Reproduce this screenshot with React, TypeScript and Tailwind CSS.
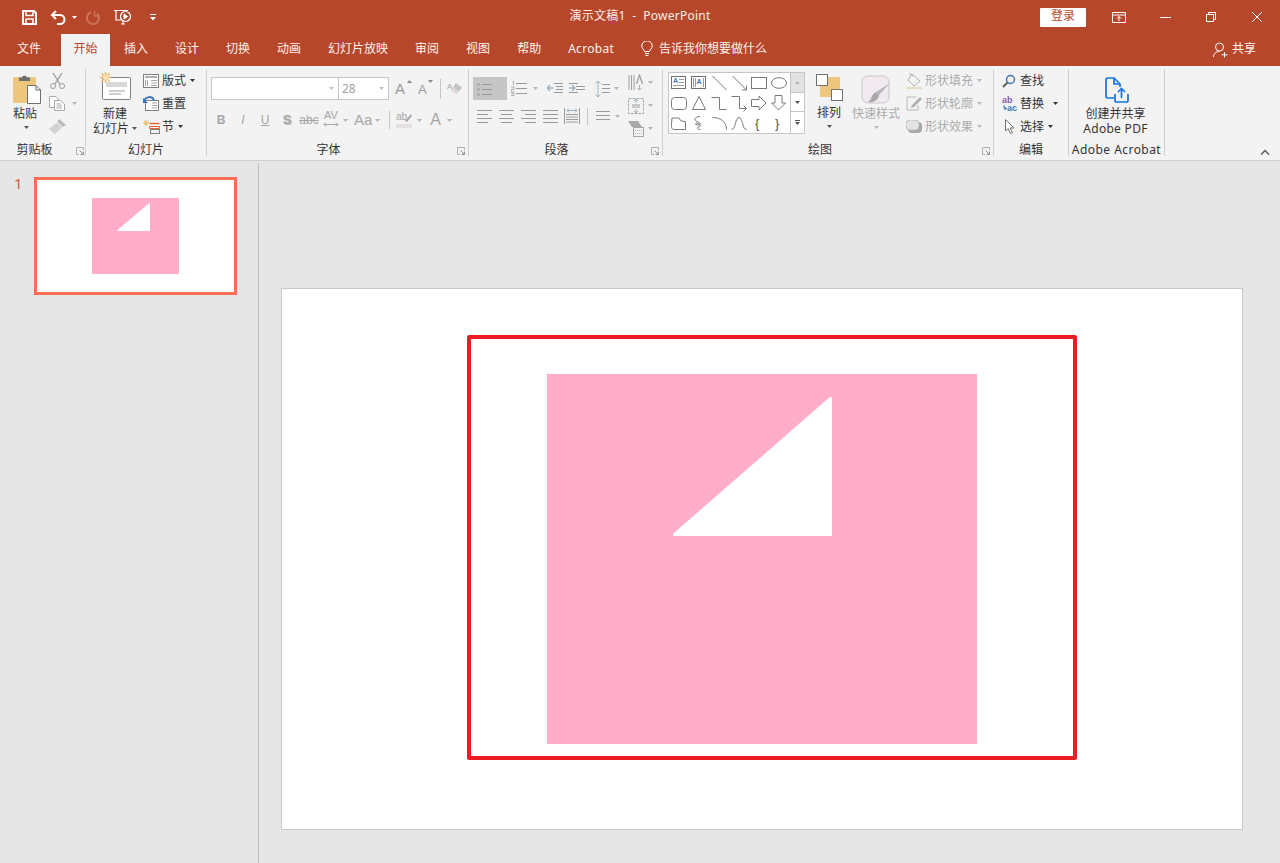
const S = "#7a7a7a";

function Caret({ className = "text-[#6a6a6a]" }: { className?: string }) {
  return (
    <svg width="5" height="3" viewBox="0 0 5 3" className={`shrink-0 ${className}`}>
      <path d="M0 0H5L2.5 3Z" fill="currentColor" />
    </svg>
  );
}

function Launcher({ className }: { className: string }) {
  return (
    <svg width="8" height="8" viewBox="0 0 8 8" className={`absolute bottom-[1px] ${className}`}>
      <path d="M7.5 3V.5H.5V7.5H3" fill="none" stroke="#b0b0b0" />
      <path d="M3.5 3.5L7 7M7.5 4.5V7.5H4.5" fill="none" stroke="#909090" />
    </svg>
  );
}

function Lines({ w = 14, rows = [2, 6, 10, 14], insets = [] as [number, number][], color = "#9a9a9a" }) {
  return (
    <svg width={w} height="16" viewBox={`0 0 ${w} 16`} className="shrink-0">
      {rows.map((y, i) => (
        <path key={y} d={`M${insets[i]?.[0] ?? 0} ${y + 0.5}H${w - (insets[i]?.[1] ?? 0)}`} stroke={color} />
      ))}
    </svg>
  );
}

function GroupLabel({ children, launcher }: { children: React.ReactNode; launcher?: string }) {
  return (
    <div className="relative h-[15px] text-center text-[12px] leading-[18px] text-[#333]">
      {children}
      {launcher && <Launcher className={launcher} />}
    </div>
  );
}

function Row({ children, className = "" }: { children: React.ReactNode; className?: string }) {
  return <div className={`flex h-[23px] items-center ${className}`}>{children}</div>;
}

function TitleBar() {
  return (
    <div className="grid h-[34px] grid-cols-[1fr_auto_1fr] items-center bg-[#b7472a] text-white">
      <div className="flex items-center pl-[22px]">
        <svg width="15" height="15" viewBox="0 0 15 15" fill="none" stroke="white" strokeWidth="2">
          <path d="M1 1H12L14 3V14H1Z" />
          <path d="M4 1V5.500H11V1" strokeWidth="1.500" />
          <path d="M4 14V9H11V14" strokeWidth="1.500" />
        </svg>
        <svg width="16" height="15" viewBox="0 0 16 15" fill="none" stroke="white" strokeWidth="2" className="ml-[13px]">
          <path d="M6 1L2 5L6 9" />
          <path d="M2 5H10A4.500 4.500 0 0 1 10 14H7" />
        </svg>
        <Caret className="ml-[6px] text-white" />
        <svg width="14" height="15" viewBox="0 0 14 15" fill="none" stroke="#cc7459" strokeWidth="2" className="ml-[9px]">
          <path d="M8.500 1V6H13.500" strokeWidth="1.500" />
          <path d="M11 3.500A6 6 0 1 1 5 2.300" />
        </svg>
        <svg width="18" height="16" viewBox="0 0 18 16" fill="none" stroke="white" className="ml-[14px]">
          <path d="M0 1.500H14M2 1.500V11H7" strokeWidth="1.200" />
          <circle cx="11.500" cy="7.500" r="5" strokeWidth="1.200" />
          <path d="M10 5V10L13.500 7.500Z" fill="white" />
          <path d="M7 15H11M9 11V15" strokeWidth="1.100" />
        </svg>
        <svg width="6" height="7" viewBox="0 0 6 7" className="ml-[18px]">
          <path d="M0 .5H6" stroke="white" />
          <path d="M0 3H6L3 6.500Z" fill="white" />
        </svg>
      </div>
      <div className="mb-[2px] text-[12px] tracking-[0.25px] whitespace-pre text-[#fbeee9]">演示文稿1  -  PowerPoint</div>
      <div className="flex items-center justify-end">
        <div className="flex h-[19px] w-[46px] items-center justify-center rounded-[1px] bg-white pb-[2px] text-[12px] text-[#b7472a]">
          登录
        </div>
        <svg width="14" height="11" viewBox="0 0 14 11" fill="none" stroke="white" className="ml-[26px]">
          <path d="M.5.5H13.500V10.500H.5ZM.5 3H13.500" />
          <path d="M7 9V4.500M5 6.500L7 4.500L9 6.500" />
        </svg>
        <svg width="11" height="1" viewBox="0 0 11 1" className="ml-[34px]">
          <path d="M0 .5H11" stroke="white" />
        </svg>
        <svg width="10" height="10" viewBox="0 0 10 10" fill="none" stroke="white" className="ml-[35px]">
          <path d="M.5 2.500H7.500V9.500H.5Z" />
          <path d="M2.500 2.500V.5H9.500V7.500H7.500" />
        </svg>
        <svg width="10" height="10" viewBox="0 0 10 10" fill="none" stroke="white" className="mr-[18px] ml-[36px]">
          <path d="M0 0L10 10M10 0L0 10" />
        </svg>
      </div>
    </div>
  );
}

function TabStrip() {
  const rest = ["设计", "切换", "动画", "幻灯片放映", "审阅", "视图", "帮助"];
  return (
    <div className="flex h-[32px] items-start bg-[#b7472a] pl-[17px] text-[12px] leading-[29px] text-[#fdf3ef]">
      <span>文件</span>
      <span className="ml-[20px] flex h-[32px] w-[49px] justify-center bg-[#f3f3f3] text-[#b7472a]">开始</span>
      <span className="ml-[14px]">插入</span>
      <div className="ml-[27px] flex items-center gap-[27px]">
        {rest.map((t) => (
          <span key={t}>{t}</span>
        ))}
        <span className="tracking-[0.3px]">Acrobat</span>
      </div>
      <svg width="12" height="16" viewBox="0 0 12 16" fill="none" stroke="white" className="mt-[7px] ml-[27px]">
        <path d="M3.500 10.500C3 8.500 .8 7.500 .8 5A5.200 5.200 0 0 1 11.200 5C11.200 7.500 9 8.500 8.500 10.500Z" />
        <path d="M4 12.500H8M4.500 14.500H7.500" />
      </svg>
      <span className="ml-[6px]">告诉我你想要做什么</span>
      <div className="ml-auto flex h-[29px] items-center pr-[24px]">
        <svg width="15" height="16" viewBox="0 0 15 16" fill="none" stroke="white" className="mt-[2px]">
          <circle cx="6.500" cy="5" r="4" />
          <path d="M.5 15C.5 11.500 3 9.500 6.500 9.500M11.500 10V15.500M8.500 12.800H14.500" />
        </svg>
        <span className="ml-[4px]">共享</span>
      </div>
    </div>
  );
}

function ClipboardGroup() {
  return (
    <div className="flex w-[86px] shrink-0 flex-col border-r border-[#d0d0d0]">
      <div className="flex h-[72px]">
        <div className="ml-[13px] flex w-[24px] flex-col items-start pt-[5px]">
          <svg width="28" height="30" viewBox="0 0 28 30" className="shrink-0">
            <rect x="0" y="3" width="23" height="26" rx="1.500" fill="#eec77e" />
            <path d="M6 3.500H9C9 1 14 1 14 3.500H17V7H6Z" fill="#6f6f6f" />
            <path d="M14.500 11.500H23L27.500 16V29.500H14.500Z" fill="white" stroke="#6f6f6f" />
            <path d="M23 11.500V16H27.500" fill="none" stroke="#6f6f6f" />
          </svg>
          <div className="mt-[2px] text-[12px] leading-[15px] whitespace-nowrap text-[#333]">粘贴</div>
          <Caret className="mt-[5px] ml-[11px] text-[#555]" />
        </div>
        <div className="ml-[12px] flex flex-col text-[#b0b0b0]">
          <Row>
            <svg width="15" height="16" viewBox="0 0 15 16" fill="none" stroke="#9c9c9c" className="ml-px">
              <path d="M3 0L10 11M12 0L5 11" strokeWidth="1.300" />
              <circle cx="3" cy="13" r="2.500" />
              <circle cx="12" cy="13" r="2.500" />
            </svg>
          </Row>
          <Row>
            <svg width="16" height="15" viewBox="0 0 16 15" fill="white" stroke="#a8a8a8">
              <path d="M.5.5H7L9 2.500V11.500H.5Z" />
              <path d="M5.500 4.500H11.500L15.500 8V14.500H5.500Z" />
              <path d="M7.500 8H12M7.500 10H13M7.500 12H13" />
            </svg>
            <Caret className="ml-[7px] text-[#b5b5b5]" />
          </Row>
          <Row>
            <svg width="17" height="15" viewBox="0 0 17 15">
              <path d="M10 0L17 6L13.500 8L8.500 2.500Z" fill="#b8b8b8" />
              <path d="M8 3.500L13 8.500L6 15L0 10Z" fill="#d2d2d2" />
            </svg>
          </Row>
        </div>
      </div>
      <GroupLabel launcher="right-[1px]">
        <span className="relative right-[8px]">剪贴板</span>
      </GroupLabel>
    </div>
  );
}

function SlidesGroup() {
  const rowText = "text-[12px] text-[#333] whitespace-nowrap";
  return (
    <div className="flex w-[121px] shrink-0 flex-col border-r border-[#d0d0d0]">
      <div className="flex h-[72px]">
        <div className="ml-[6px] flex w-[46px] flex-col items-center pt-[3px]">
          <svg width="31" height="28" viewBox="0 0 31 28" className="shrink-0">
            <rect x="2.500" y="5.500" width="28" height="22" rx="1" fill="white" stroke="#808080" />
            <path d="M6 10H27V15H6Z" fill="#d8d8d8" />
            <path d="M9 19H25M9 22H21" stroke="#a0a0a0" />
            <path d="M5.500 0V11M0 5.500H11M1.500 1.500L9.500 9.500M9.500 1.500L1.500 9.500" stroke="#edb964" strokeWidth="1.500" />
            <circle cx="5.500" cy="5.500" r="2.500" fill="#f9e3b4" />
          </svg>
          <div className="mt-[6px] text-[12px] leading-[15px] text-[#333]">新建</div>
          <div className="flex items-center gap-[3px] text-[12px] leading-[15px] whitespace-nowrap text-[#333]">
            幻灯片
            <Caret className="text-[#555]" />
          </div>
        </div>
        <div className="ml-[5px] flex flex-col">
          <Row className={rowText}>
            <svg width="16" height="14" viewBox="0 0 16 14" fill="none" className="mr-[3px]">
              <rect x=".5" y=".5" width="15" height="13" fill="white" stroke="#808080" />
              <path d="M2 3H14" stroke="#b0b0b0" strokeWidth="2" />
              <path d="M2.500 6V12M4.500 6V12" stroke="#a8a8a8" />
              <path d="M8 6.500H14M8 9H14M8 11.500H14" stroke="#a8a8a8" />
            </svg>
            版式
            <Caret className="ml-[4px]" />
          </Row>
          <Row className={rowText}>
            <svg width="16" height="15" viewBox="0 0 16 15" fill="none" className="mr-[3px]">
              <rect x="2.500" y="4.500" width="13" height="10" fill="white" stroke="#808080" />
              <path d="M9 7H14M9 9.500H14M9 12H14" stroke="#a8a8a8" />
              <path d="M1 5C3 0 9 0 11 4" stroke="#3f77b5" strokeWidth="2" />
              <path d="M0 2V7H5Z" fill="#3f77b5" />
            </svg>
            重置
          </Row>
          <Row className={rowText}>
            <svg width="17" height="15" viewBox="0 0 17 15" fill="none" className="mr-[2px]">
              <path d="M3 1V7M0 4H6M1 2L5 6M5 2L1 6" stroke="#edb964" />
              <path d="M6.500 4.500H16.500" stroke="#e2672f" strokeWidth="1.300" />
              <path d="M6.500 7.500H16.500V9.500H6.500Z" fill="none" stroke="#e2672f" />
              <rect x="7.500" y="10.500" width="9" height="4" stroke="#808080" />
            </svg>
            节
            <Caret className="ml-[4px]" />
          </Row>
        </div>
      </div>
      <GroupLabel>幻灯片</GroupLabel>
    </div>
  );
}

function FontGroup() {
  const g = "text-[#a6a6a6]";
  const cell = "flex h-[22px] w-[22px] items-center justify-center font-['Liberation_Sans',sans-serif] text-[12px]";
  return (
    <div className="flex w-[262px] shrink-0 flex-col border-r border-[#d0d0d0]">
      <div className="h-[72px] pt-[8px] pl-[3px]">
        <div className="flex h-[23px] items-center">
          <div className="ml-[1px] flex h-[23px] w-[128px] items-center justify-end border border-[#c6c6c6] bg-white pr-[4px]">
            <Caret className="text-[#c0c0c0]" />
          </div>
          <div className="flex h-[23px] w-[50px] items-center justify-between border border-l-0 border-[#c6c6c6] bg-white pr-[4px] pl-[3px] font-['Noto_Sans',sans-serif] text-[12px] text-[#a0a0a0]">
            28
            <Caret className="text-[#c0c0c0]" />
          </div>
          <div className="relative ml-[6px] h-[18px] w-[14px] font-['Liberation_Sans',sans-serif] text-[15px] leading-[18px] text-[#9a9a9a]">
            A
            <svg width="5" height="3" viewBox="0 0 5 3" className="absolute top-0 -right-[3px]">
              <path d="M0 3L2.500 0L5 3Z" fill="#8a8a8a" />
            </svg>
          </div>
          <div className="relative ml-[9px] h-[18px] w-[12px] font-['Liberation_Sans',sans-serif] text-[13px] leading-[19px] text-[#9a9a9a]">
            A
            <svg width="5" height="3" viewBox="0 0 5 3" className="absolute top-0 -right-[3px]">
              <path d="M0 0H5L2.500 3Z" fill="#8a8a8a" />
            </svg>
          </div>
          <div className="ml-[10px] h-[20px] w-px bg-[#c6c6c6]" />
          <svg width="15" height="14" viewBox="0 0 15 14" className="ml-[6px]">
            <path d="M9 1L15 5.500L9.500 12L4 8Z" fill="#c4c4c4" />
            <path d="M4 8L6.500 5L12 9.500L9.500 12Z" fill="#e2d8da" />
            <text x="0" y="7" fontSize="8" fontFamily="Liberation Sans" fill="#a6a6a6">A</text>
          </svg>
        </div>
        <div className="mt-[8px] flex items-center">
          <span className={`${cell} font-bold ${g}`}>B</span>
          <span className={`${cell} italic ${g}`}>I</span>
          <span className={`${cell} underline ${g}`}>U</span>
          <span className={`${cell} font-bold text-[13px] text-[#a6a6a6] [text-shadow:1px_1px_1px_#bbb]`}>S</span>
          <span className={`${cell} line-through ${g}`}>abc</span>
          <span className="relative flex h-[22px] w-[22px] flex-col items-center justify-start font-['Liberation_Sans',sans-serif] text-[11px] leading-[13px] text-[#a6a6a6]">
            AV
            <svg width="16" height="5" viewBox="0 0 16 5" fill="none" stroke="#a6a6a6">
              <path d="M1 2.500H15M3 .5L1 2.500L3 4.500M13 .5L15 2.500L13 4.500" />
            </svg>
          </span>
          <Caret className="ml-[1px] text-[#b5b5b5]" />
          <span className={`ml-[6px] font-['Liberation_Sans',sans-serif] text-[15px] ${g}`}>Aa</span>
          <Caret className="ml-[3px] text-[#b5b5b5]" />
          <div className="ml-[9px] h-[18px] w-px bg-[#c6c6c6]" />
          <div className="ml-[6px] flex w-[16px] flex-col items-start">
            <svg width="16" height="18" viewBox="0 0 16 18">
              <text x="0" y="9" fontSize="10" fontFamily="Liberation Sans" fill="#a6a6a6">ab</text>
              <path d="M9 10L15 3L16 5L11 11Z" fill="#b0a8a8" />
              <rect x="0" y="13" width="16" height="4" fill="#e6e0e6" />
            </svg>
          </div>
          <Caret className="ml-[5px] text-[#b5b5b5]" />
          <span className="ml-[8px] font-['Liberation_Sans',sans-serif] text-[16px] text-[#a6a6a6]">A</span>
          <Caret className="ml-[6px] text-[#b5b5b5]" />
        </div>
      </div>
      <GroupLabel launcher="right-[3px]">
        <span className="relative left-[-9px]">字体</span>
      </GroupLabel>
    </div>
  );
}

function ParagraphGroup() {
  return (
    <div className="flex w-[194px] shrink-0 flex-col border-r border-[#d0d0d0]">
      <div className="flex h-[72px] pl-[4px]">
        <div className="w-[155px] pt-[8px]">
          <div className="flex h-[23px] items-center">
            <div className="flex h-[23px] w-[34px] items-center bg-[#c6c6c6] pl-[4px]">
              <svg width="16" height="14" viewBox="0 0 16 14">
                <path d="M5 2.500H15M5 7.500H15M5 12.500H15" stroke="#9a9a9a" />
                <path d="M0 2.500H3M0 7.500H3M0 12.500H3" stroke="#a8a8a8" strokeWidth="2" />
              </svg>
            </div>
            <svg width="17" height="15" viewBox="0 0 17 15" className="ml-[4px]">
              <path d="M5 2.500H16M5 7.500H16M5 12.500H16" stroke="#9a9a9a" />
              <path d="M1 0H2.500V4M0 6H3V8.500H0V11H3M0 12H3V14.500H0" fill="none" stroke="#a0a0a0" strokeWidth=".8" />
            </svg>
            <Caret className="ml-[5px] text-[#b5b5b5]" />
            <svg width="16" height="13" viewBox="0 0 16 13" className="ml-[9px]">
              <path d="M7 1.500H16M9 4.500H16M9 7.500H16M7 10.500H16" stroke="#9a9a9a" />
              <path d="M0 6H6M3 3L0 6L3 9" fill="none" stroke="#a0b0c0" strokeWidth="1.300" />
            </svg>
            <svg width="16" height="13" viewBox="0 0 16 13" className="ml-[6px]">
              <path d="M0 1.500H9M0 10.500H9M7 4.500H16M7 7.500H16" stroke="#9a9a9a" />
              <path d="M0 6H6M3 3L6 6L3 9" fill="none" stroke="#a0b0c0" strokeWidth="1.300" />
            </svg>
            <svg width="15" height="18" viewBox="0 0 15 18" className="ml-[10px]">
              <path d="M7 4.500H15M7 8.500H15M7 12.500H15" stroke="#9a9a9a" />
              <path d="M3 1V17M.5 3.500L3 1L5.500 3.500M.5 14.500L3 17L5.500 14.500" fill="none" stroke="#a0b0c0" />
            </svg>
            <Caret className="ml-[4px] text-[#b5b5b5]" />
          </div>
          <div className="mt-[7px] flex h-[18px] items-center pl-[4px]">
            <Lines w={15} insets={[[0, 0], [0, 4], [0, 0], [0, 4]]} />
            <div className="ml-[7px]"><Lines w={15} insets={[[0, 0], [2, 2], [0, 0], [2, 2]]} /></div>
            <div className="ml-[7px]"><Lines w={15} insets={[[0, 0], [4, 0], [0, 0], [4, 0]]} /></div>
            <div className="ml-[7px]"><Lines w={15} /></div>
            <svg width="16" height="18" viewBox="0 0 16 18" className="ml-[6px]">
              <path d="M.5 1V17M15.500 1V17" stroke="#9a9a9a" />
              <path d="M3 3.500H13M5 1.500L3 3.500L5 5.500M11 1.500L13 3.500L11 5.500" fill="none" stroke="#a0b0c0" />
              <path d="M2 7.500H14M2 10H14M2 12.500H14M2 15H14" stroke="#9a9a9a" />
            </svg>
            <div className="ml-[7px] h-[17px] w-px bg-[#c6c6c6]" />
            <div className="ml-[8px]"><Lines w={14} rows={[3, 7, 11]} /></div>
            <Caret className="ml-[5px] text-[#b5b5b5]" />
          </div>
        </div>
        <div className="flex flex-col pt-[2px]">
          <div className="flex h-[23px] items-center">
            <svg width="16" height="17" viewBox="0 0 16 17">
              <path d="M1 1V16M3.500 1V16M6 1V16" stroke="#a0a0a0" />
              <path d="M8.500 10L11.500 1L14.500 10" fill="none" stroke="#a0a0a0" strokeWidth="1.300" />
              <path d="M11.500 11V16M9.500 14L11.500 16L13.500 14" fill="none" stroke="#a0b0c0" />
            </svg>
            <Caret className="ml-[4px] text-[#b5b5b5]" />
          </div>
          <div className="flex h-[23px] items-center">
            <svg width="16" height="16" viewBox="0 0 16 16">
              <rect x=".5" y=".5" width="15" height="15" fill="none" stroke="#a8a8a8" strokeDasharray="3 1" />
              <path d="M4 7H12M4 9H12" stroke="#a0a0a0" />
              <path d="M8 1V5M6 3L8 1L10 3M8 11V15M6 13L8 15L10 13" fill="none" stroke="#a0b0c0" />
            </svg>
            <Caret className="ml-[4px] text-[#b5b5b5]" />
          </div>
          <div className="flex h-[23px] items-center">
            <svg width="16" height="16" viewBox="0 0 16 16">
              <path d="M0 0H10L14 6H4Z" fill="#a8a8a8" />
              <rect x="5.500" y="6.500" width="10" height="9" fill="#f3f3f3" stroke="#a8a8a8" />
              <path d="M7 9.500H14M7 12.500H14" stroke="#b8b8b8" strokeDasharray="1 1" />
            </svg>
            <Caret className="ml-[4px] text-[#b5b5b5]" />
          </div>
        </div>
      </div>
      <GroupLabel launcher="right-[3px]">
        <span className="relative left-[-9px]">段落</span>
      </GroupLabel>
    </div>
  );
}

function ShapeGallery() {
  return (
    <div className="mt-[3px] flex h-[62px] w-[137px] border border-[#c6c6c6] bg-white">
      <svg width="121" height="60" viewBox="0 0 121 60" fill="none" stroke={S} className="shrink-0">
        <rect x="2.500" y="3.500" width="14" height="12" stroke="#707070" />
        <text x="4" y="9.500" fontSize="7" fontWeight="700" fontFamily="Liberation Sans" fill="#3f77b5" stroke="none">A</text>
        <path d="M10 6.500H15M10 9.500H15M4 12.500H15" stroke="#9a9a9a" />
        <rect x="22.500" y="3.500" width="14" height="12" stroke="#707070" />
        <path d="M24.500 5V14M26.500 5V14M34.500 5V14" stroke="#9a9a9a" />
        <text x="27.500" y="11" fontSize="7" fontWeight="700" fontFamily="Liberation Sans" fill="#3f77b5" stroke="none">A</text>
        <path d="M43.500 3L57.500 17" />
        <path d="M63.500 3L77.500 17M77.500 12.500V17H73" />
        <rect x="82.500" y="4.500" width="15" height="11" />
        <ellipse cx="110" cy="10" rx="7.500" ry="5.300" />
        <rect x="2.500" y="24.500" width="15" height="12" rx="3" />
        <path d="M30 23.500L36.500 36.500H23.500Z" />
        <path d="M42.500 24.500H50.500V36.500H57.500" />
        <path d="M62.500 23.500H70.500V35.500H77.500M74.500 32.500L77.500 35.500L74.500 38.500" />
        <path d="M82.500 26.500H90V23L97 30L90 37V33.500H82.500Z" />
        <path d="M106 22.500H113V30H116.500L109.500 37L102.500 30H106Z" />
        <path d="M3 45H10L12 48L16.500 48.500V56.500H4.500C2 56.500 2.500 52 2.500 51Z" />
        <path d="M31 43.500C25 43.500 25 47.500 28 48.500C32 50 33 52 28.500 52C25.500 52 26 49.500 29 50.500C33 52 31 54 29.500 54C27 54.500 29.500 57 31.500 56.500" />
        <path d="M43.500 44.500C52 44.500 57.500 49 57.500 56.500" />
        <path d="M62.500 56.500C67 56.500 66 44.500 70 44.500C74 44.500 73 56.500 77.500 56.500" />
        <text x="86" y="54.500" fontSize="13" fontFamily="Liberation Sans" fill="#555" stroke="none">{"{"}</text>
        <text x="106" y="54.500" fontSize="13" fontFamily="Liberation Sans" fill="#555" stroke="none">{"}"}</text>
      </svg>
      <div className="flex w-[14px] flex-col border-l border-[#c6c6c6]">
        <div className="flex h-[20px] items-center justify-center border-b border-[#c6c6c6] bg-[#e2e2e2]">
          <svg width="5" height="3" viewBox="0 0 5 3"><path d="M0 3L2.500 0L5 3Z" fill="#b8b8b8" /></svg>
        </div>
        <div className="flex h-[19px] items-center justify-center border-b border-[#c6c6c6]">
          <Caret className="text-[#555]" />
        </div>
        <div className="flex flex-1 flex-col items-center justify-center gap-[1px]">
          <div className="h-px w-[5px] bg-[#555]" />
          <Caret className="text-[#555]" />
        </div>
      </div>
    </div>
  );
}

function DrawingGroup() {
  const dim = "text-[12px] whitespace-nowrap text-[#ababab]";
  return (
    <div className="flex w-[331px] shrink-0 flex-col border-r border-[#d0d0d0]">
      <div className="flex h-[72px] pl-[5px]">
        <ShapeGallery />
        <div className="ml-[10px] flex w-[28px] flex-col items-center pt-[5px]">
          <svg width="27" height="27" viewBox="0 0 27 27" className="shrink-0">
            <rect x="10" y="3" width="14" height="12" fill="#eec77e" />
            <rect x="4" y="12" width="12" height="11" fill="#eec77e" />
            <rect x=".5" y=".5" width="11" height="11" fill="white" stroke="#707070" />
            <rect x="15.500" y="15.500" width="11" height="11" fill="white" stroke="#707070" />
          </svg>
          <div className="mt-[4px] text-[12px] leading-[15px] whitespace-nowrap text-[#333]">排列</div>
          <Caret className="mt-[5px] text-[#555]" />
        </div>
        <div className="ml-[9px] flex w-[48px] flex-col items-center pt-[6px]">
          <svg width="30" height="29" viewBox="0 0 30 29" className="shrink-0">
            <rect x="1" y="1" width="27" height="27" rx="6" fill="#f0eaf0" stroke="#c8c8c8" />
            <path d="M29 8L18 20L15 17Z" fill="#b8b8b8" />
            <path d="M15 17L18 20C17 26 11 28 7 27C11 25 10 19 15 17Z" fill="#a8a8a8" />
          </svg>
          <div className="mt-[2px] text-[12px] leading-[15px] whitespace-nowrap text-[#ababab]">快速样式</div>
          <Caret className="mt-[5px] text-[#b5b5b5]" />
        </div>
        <div className="ml-[6px] flex flex-col">
          <Row className={dim}>
            <svg width="16" height="16" viewBox="0 0 16 16" className="mr-[3px]">
              <path d="M6 1L14 8L8 13L2 7Z" fill="#f3f3f3" stroke="#b0b0b0" />
              <path d="M3 1.500C5 0 6 2 6.500 4" fill="none" stroke="#b0b0b0" />
              <rect x="0" y="14" width="16" height="2" fill="#e6dcc8" />
            </svg>
            形状填充
            <Caret className="ml-[4px] text-[#bcbcbc]" />
          </Row>
          <Row className={dim}>
            <svg width="16" height="15" viewBox="0 0 16 15" className="mr-[3px]">
              <path d="M10 1H1V14H12V9" fill="none" stroke="#b8b8b8" />
              <path d="M14 1L16 3L8 11L5 12L6 9Z" fill="#b0b0b0" />
            </svg>
            形状轮廓
            <Caret className="ml-[4px] text-[#bcbcbc]" />
          </Row>
          <Row className={dim}>
            <svg width="16" height="13" viewBox="0 0 16 13" className="mr-[3px]">
              <rect x="2" y="2" width="14" height="11" rx="4" fill="#a8a8a8" />
              <rect x="0" y="0" width="13" height="10" rx="4" fill="#e4e4e4" stroke="#c0c0c0" />
            </svg>
            形状效果
            <Caret className="ml-[4px] text-[#bcbcbc]" />
          </Row>
        </div>
      </div>
      <GroupLabel launcher="right-[3px]">
        <span className="relative left-[-8px]">绘图</span>
      </GroupLabel>
    </div>
  );
}

function EditGroup() {
  const t = "text-[12px] whitespace-nowrap text-[#333]";
  return (
    <div className="flex w-[75px] shrink-0 flex-col border-r border-[#d0d0d0]">
      <div className="flex h-[72px] flex-col pl-[7px]">
        <Row className={t}>
          <svg width="14" height="14" viewBox="0 0 14 14" fill="none" className="mr-[4px] ml-[1px]">
            <circle cx="8.500" cy="5.500" r="4" stroke="#3f77b5" strokeWidth="1.500" />
            <path d="M5.500 8.500L1 13" stroke="#606060" strokeWidth="2" />
          </svg>
          查找
        </Row>
        <Row className={t}>
          <svg width="17" height="16" viewBox="0 0 17 16" className="mr-[2px]">
            <text x="1" y="7" fontSize="9" fontFamily="Liberation Sans" fontWeight="700" fill="#8a5aa8">ab</text>
            <text x="6" y="15" fontSize="9" fontFamily="Liberation Sans" fontWeight="700" fill="#3f77b5">ac</text>
            <path d="M3 9V12.500H5M3.500 11L5.500 12.500L3.500 14" fill="none" stroke="#3f77b5" />
          </svg>
          替换
          <Caret className="ml-[9px]" />
        </Row>
        <Row className={t}>
          <svg width="10" height="15" viewBox="0 0 10 15" className="mr-[5px] ml-[4px]">
            <path d="M.5.5V12L3 9.500L5.500 14.500L7.500 13.500L5 9H9Z" fill="white" stroke="#707070" />
          </svg>
          选择
          <Caret className="ml-[4px]" />
        </Row>
      </div>
      <GroupLabel>
        <span className="relative left-[0px]">编辑</span>
      </GroupLabel>
    </div>
  );
}

function AcrobatGroup() {
  return (
    <div className="flex w-[96px] shrink-0 flex-col border-r border-[#d0d0d0]">
      <div className="flex h-[72px] flex-col items-center pt-[8px] pr-[2px] text-[12px] leading-[15px] text-[#333]">
        <svg width="24" height="26" viewBox="0 0 24 26" fill="none" stroke="#1473e6" strokeWidth="1.700" className="ml-[2px] shrink-0">
          <path d="M9 21H2.500A1.500 1.500 0 0 1 1 19.500V2.500A1.500 1.500 0 0 1 2.500 1H9L15 7V10" />
          <path d="M9 1V7H15" />
          <path d="M10 17V23.500A1.500 1.500 0 0 0 11.500 25H21.500A1.500 1.500 0 0 0 23 23.500V17" />
          <path d="M16.500 21V12M13 15L16.500 11.500L20 15" />
        </svg>
        <div className="mt-[3px] whitespace-nowrap">创建并共享</div>
        <div className="font-['Noto_Sans',sans-serif] tracking-[0.3px] whitespace-nowrap">Adobe PDF</div>
      </div>
      <GroupLabel>
        <span className="font-['Noto_Sans',sans-serif] tracking-[0.45px] whitespace-nowrap">Adobe Acrobat</span>
      </GroupLabel>
    </div>
  );
}

function Ribbon() {
  return (
    <div className="flex h-[95px] border-b border-[#d0d0d0] bg-[#f3f3f3] pt-[3px] pb-[4px]">
      <ClipboardGroup />
      <SlidesGroup />
      <FontGroup />
      <ParagraphGroup />
      <DrawingGroup />
      <EditGroup />
      <AcrobatGroup />
      <div className="flex flex-1 items-end justify-end pr-[10px] pb-[1px]">
        <svg width="10" height="6" viewBox="0 0 10 6" fill="none" stroke="#606060" strokeWidth="1.500">
          <path d="M1 5.500L5 1.500L9 5.500" />
        </svg>
      </div>
    </div>
  );
}

function Triangle({ w, h, stroke = 3 }: { w: number; h: number; stroke?: number }) {
  const i = stroke / 2;
  return (
    <svg width={w} height={h} viewBox={`0 0 ${w} ${h}`} className="block">
      <path
        d={`M${w - i} ${i}V${h - i}H${i}Z`}
        fill="white"
        stroke="white"
        strokeWidth={stroke}
        strokeLinejoin="round"
      />
    </svg>
  );
}

export default function App() {
  return (
    <div className="flex h-[863px] w-[1280px] flex-col overflow-hidden bg-[#e6e6e6] font-['Noto_Sans','Noto_Sans_CJK_SC',sans-serif]">
      <TitleBar />
      <TabStrip />
      <Ribbon />
      <div className="flex flex-1">
        <div className="mt-[2px] flex w-[259px] shrink-0 border-r border-[#c0c0c0] pt-[14px]">
          <div className="ml-[14px] w-[20px] text-[15px] leading-[12px] text-[#d2593a]">1</div>
          <div className="h-[118px] w-[203px] border-[3px] border-[#f27152] bg-white pt-[18px] pl-[55px]">
            <div className="h-[76px] w-[87px] bg-[#ffadc9] pt-[5px] pl-[25px]">
              <Triangle w={33} h={28} stroke={1} />
            </div>
          </div>
        </div>
        <div className="flex-1 pt-[127px] pl-[22px]">
          <div className="h-[542px] w-[962px] border border-[#c8c8c8] bg-white pt-[46px] pl-[185px]">
            <div className="h-[425px] w-[610px] rounded-[2px] border-[4px] border-[#ed1c24] pt-[35px] pl-[76px]">
              <div className="h-[370px] w-[430px] bg-[#ffadc9] pt-[23px] pl-[126px]">
                <Triangle w={159} h={139} />
              </div>
            </div>
          </div>
        </div>
      </div>
    </div>
  );
}
